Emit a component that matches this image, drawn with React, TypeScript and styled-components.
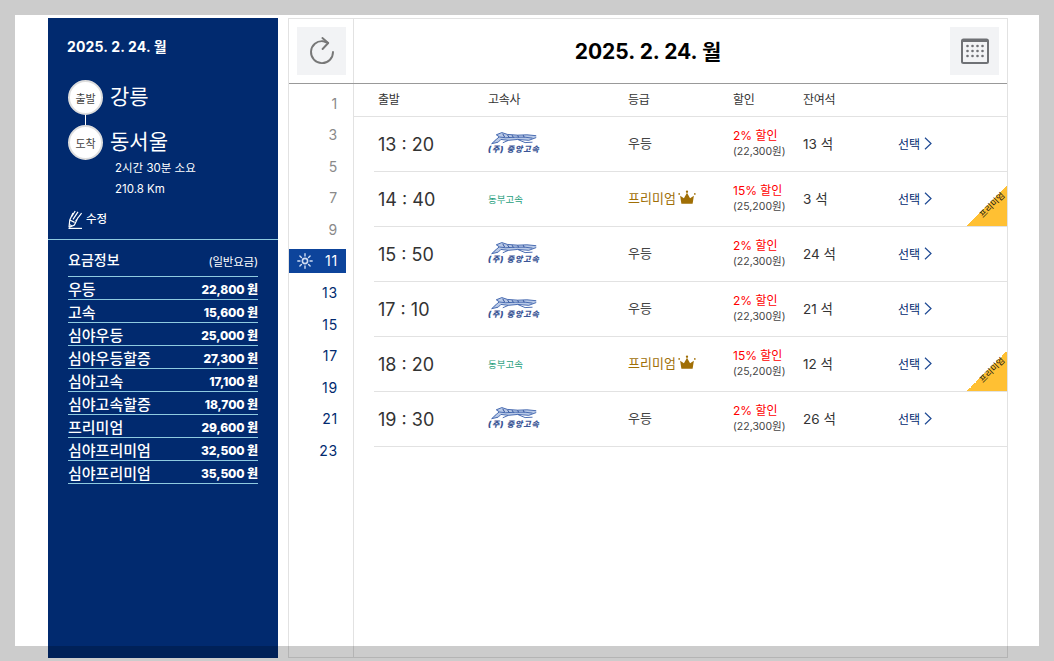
import React from 'react';
import styled, { createGlobalStyle } from 'styled-components';

const FONT = `Inter, "Noto Sans CJK KR", sans-serif`;
const NAVY = '#012a6f';

type Fare = { name: string; price: string };
type Trip = {
  time: string;
  company: 'kobus' | 'dongbu';
  premium?: boolean;
  discount: string;
  price: string;
  seats: string;
};

const FARES: Fare[] = [
  { name: '우등', price: '22,800 원' },
  { name: '고속', price: '15,600 원' },
  { name: '심야우등', price: '25,000 원' },
  { name: '심야우등할증', price: '27,300 원' },
  { name: '심야고속', price: '17,100 원' },
  { name: '심야고속할증', price: '18,700 원' },
  { name: '프리미엄', price: '29,600 원' },
  { name: '심야프리미엄', price: '32,500 원' },
  { name: '심야프리미엄', price: '35,500 원' },
];

const TRIPS: Trip[] = [
  { time: '13 : 20', company: 'kobus', discount: '2% 할인', price: '(22,300원)', seats: '13 석' },
  { time: '14 : 40', company: 'dongbu', premium: true, discount: '15% 할인', price: '(25,200원)', seats: '3 석' },
  { time: '15 : 50', company: 'kobus', discount: '2% 할인', price: '(22,300원)', seats: '24 석' },
  { time: '17 : 10', company: 'kobus', discount: '2% 할인', price: '(22,300원)', seats: '21 석' },
  { time: '18 : 20', company: 'dongbu', premium: true, discount: '15% 할인', price: '(25,200원)', seats: '12 석' },
  { time: '19 : 30', company: 'kobus', discount: '2% 할인', price: '(22,300원)', seats: '26 석' },
];

const HOURS = [1, 3, 5, 7, 9, 11, 13, 15, 17, 19, 21, 23];

const RefreshIcon = () => (
  <svg width="26" height="28" viewBox="0 0 26 28" fill="none" stroke="#777" strokeWidth="1.9">
    <path d="M24 15 A11 11 0 1 1 14 4.2 L19 6" strokeLinecap="round" />
    <path d="M13.4 1 L19.2 6 L13.6 12" strokeLinecap="round" strokeLinejoin="round" />
  </svg>
);

const CalendarIcon = () => (
  <svg width="28" height="26" viewBox="0 0 28 26">
    <rect x="1" y="1.6" width="26" height="23.4" rx="1.5" fill="none" stroke="#6f7175" strokeWidth="2" />
    <rect x="1" y="1" width="26" height="3" fill="#6f7175" />
    {[8, 13, 18].map((y) =>
      [6, 11, 16, 21].map((x) => <circle key={`${x}-${y}`} cx={x + 0.5} cy={y} r="1.3" fill="#6f7175" />),
    )}
  </svg>
);

const PencilIcon = () => (
  <svg width="15" height="19" viewBox="0 0 15 19" fill="none" stroke="#fff" strokeWidth="1.2">
    <path d="M0.5 18.4 H14" />
    <path d="M1 17.4 L1.8 10 L5 3 M1 17.4 L6.4 15 L10 7.6 M1.8 10 L6.6 12.4 M3.6 6.8 L7.2 1 M5 9.4 L10 1.8 M7.6 11 L13.6 3.2 M2 14.6 L3.8 16" />
  </svg>
);

const SunIcon = () => (
  <svg width="16" height="16" viewBox="0 0 16 16" fill="none" stroke="#cfdcf2" strokeLinecap="round">
    <circle cx="8" cy="8" r="2.6" strokeWidth="1.6" />
    <path
      strokeWidth="1.4"
      d="M8 .8V3M8 13V15.2M.8 8H3M13 8H15.2M2.9 2.9L4.4 4.4M11.6 11.6L13.1 13.1M2.9 13.1L4.4 11.6M11.6 4.4L13.1 2.9"
    />
  </svg>
);

const CrownIcon = () => (
  <svg width="18" height="15" viewBox="0 0 17 14">
    <path fill="#a06f06" d="M3.2 12.8 L2 5.4 L5.6 7.8 L8.5 2.6 L11.4 7.8 L15 5.4 L13.8 12.8 Z" />
    <circle cx="8.5" cy="1.6" r="1.1" fill="#a06f06" />
    <circle cx="1.1" cy="3.6" r="0.8" fill="#a06f06" />
    <circle cx="15.9" cy="3.6" r="0.8" fill="#a06f06" />
  </svg>
);

const ChevronIcon = () => (
  <svg width="8" height="13" viewBox="0 0 8 13" fill="none" stroke="#1f4a94" strokeWidth="1.2">
    <path d="M1 .8 L7 6.5 L1 12.2" />
  </svg>
);

const DogIcon = () => (
  <svg width="50" height="13" viewBox="0 0 50 14">
    <path fill="#b9c9e6" d="M7 3 L13 .6 L19 2.6 L30 3.4 L40 3 L50 4 L50 6 L42 9 L30 8 L20 9 L12 8 L9 11 L2 12.6 L6 8 L10 6 Z" />
    <g fill="none" stroke="#3f63ad" strokeWidth="1">
      <path d="M7 3 L13 .6 L19 2.6 L30 3.4 L40 3 L50 4" />
      <path d="M10 5.4 L7 8 L2 12.6 L9 11 L12 8 L20 9 L30 8 L42 9 L50 6" />
      <path d="M7 3 L10.5 5.4 L17 6.2 L28 5.6 L38 5.6 L46 6.6" />
      <path d="M14 2 L16 5.6 M19 3 L21 6 M24 3.4 L25.4 5.8 M30 3.6 L31 5.8 M36 3.4 L37 5.6" stroke="#2b4c96" />
      <path d="M30 8 L38 11.4 L46 11 M20 9 L14 11.6" />
    </g>
  </svg>
);

const App: React.FC = () => {
  return (
    <>
      <GlobalStyle />
      <Page>
        <Sidebar>
          <SideDate>2025. 2. 24. 월</SideDate>
          <Route>
            <Stop>
              <StopBadge>출발</StopBadge>
              <StopName>강릉</StopName>
            </Stop>
            <Stop>
              <StopBadge>도착</StopBadge>
              <StopName>동서울</StopName>
            </Stop>
          </Route>
          <RouteMeta>
            <span>2시간 30분 소요</span>
            <span>210.8 Km</span>
          </RouteMeta>
          <EditLink>
            <PencilIcon />
            <EditLabel>수정</EditLabel>
          </EditLink>
          <FarePanel>
            <FareHeader>
              <FareTitle>요금정보</FareTitle>
              <FareNote>(일반요금)</FareNote>
            </FareHeader>
            {FARES.map((fare, i) => (
              <FareRow key={i}>
                <span>{fare.name}</span>
                <FarePrice>{fare.price}</FarePrice>
              </FareRow>
            ))}
          </FarePanel>
        </Sidebar>
        <Main>
          <TopBar>
            <TopLeft>
              <IconButton>
                <RefreshIcon />
              </IconButton>
            </TopLeft>
            <Title>2025. 2. 24. 월</Title>
            <IconButton>
              <CalendarIcon />
            </IconButton>
          </TopBar>
          <Body>
            <HourColumn>
              {HOURS.map((hour) => (
                <HourItem key={hour} $active={hour === 11} $past={hour < 11}>
                  {hour === 11 && <SunIcon />}
                  {hour}
                </HourItem>
              ))}
            </HourColumn>
            <TripList>
              <HeaderRow>
                <span>출발</span>
                <span>고속사</span>
                <span>등급</span>
                <span>할인</span>
                <span>잔여석</span>
              </HeaderRow>
              {TRIPS.map((trip) => (
                <TripRow key={trip.time}>
                  <TimeCell>{trip.time}</TimeCell>
                  {trip.company === 'kobus' ? (
                    <Kobus>
                      <DogIcon />
                      <KobusName>(주) 중앙고속</KobusName>
                    </Kobus>
                  ) : (
                    <Dongbu>동부고속</Dongbu>
                  )}
                  <GradeCell $premium={trip.premium}>
                    {trip.premium ? '프리미엄' : '우등'}
                    {trip.premium && <CrownIcon />}
                  </GradeCell>
                  <DiscountCell>
                    <DiscountRate>{trip.discount}</DiscountRate>
                    <DiscountPrice>{trip.price}</DiscountPrice>
                  </DiscountCell>
                  <SeatCell>{trip.seats}</SeatCell>
                  <SelectLink>
                    선택
                    <ChevronIcon />
                  </SelectLink>
                  {trip.premium && (
                    <Ribbon>
                      <RibbonText>프리미엄</RibbonText>
                    </Ribbon>
                  )}
                </TripRow>
              ))}
            </TripList>
          </Body>
        </Main>
      </Page>
      <Frame />
    </>
  );
};
export default App;

const GlobalStyle = createGlobalStyle`
  html, body {
    margin: 0;
    height: 100%;
    overflow: hidden;
    background: #fff;
  }
  body {
    font-family: ${FONT};
    color: #222;
  }
  * {
    box-sizing: border-box;
  }
`;

const Frame = styled.div`
  position: fixed;
  inset: 0;
  border: 15px solid rgba(0, 0, 0, 0.2);
  pointer-events: none;
`;

const Page = styled.div`
  display: flex;
  gap: 10px;
  width: 960px;
  height: 640px;
  margin: 18px 0 0 48px;
`;

const Sidebar = styled.aside`
  width: 230px;
  background: ${NAVY};
  color: #fff;
  display: flex;
  flex-direction: column;
`;

const SideDate = styled.div`
  margin: 19px 0 0 19px;
  font-size: 14px;
  line-height: 20px;
  font-weight: 700;
  letter-spacing: 0.15px;
`;

const Route = styled.div`
  display: flex;
  flex-direction: column;
  gap: 10px;
  margin: 23px 0 0 20px;
`;

const Stop = styled.div`
  position: relative;
  display: flex;
  align-items: center;
  gap: 7px;
  height: 35px;
  &:first-child::after {
    content: '';
    position: absolute;
    left: 17px;
    top: 35px;
    width: 1px;
    height: 10px;
    background: #fff;
  }
`;

const StopBadge = styled.div`
  width: 35px;
  height: 35px;
  border-radius: 50%;
  background: #fff;
  border: 2px solid #ddd;
  color: #444;
  font-size: 11px;
  display: flex;
  align-items: center;
  justify-content: center;
`;

const StopName = styled.div`
  font-size: 21px;
  line-height: 30px;
  margin-top: -1px;
`;

const RouteMeta = styled.div`
  display: flex;
  flex-direction: column;
  margin: -2px 0 0 67px;
  font-size: 11.5px;
  line-height: 21px;
`;

const EditLink = styled.div`
  display: flex;
  align-items: center;
  gap: 3px;
  margin: 9px 0 0 20px;
  height: 20px;
`;

const EditLabel = styled.span`
  font-size: 11.5px;
  font-weight: 500;
  margin-top: -3px;
`;

const FarePanel = styled.div`
  margin-top: 10px;
  padding: 8px 20px 0;
  border-top: 1px solid #8fcbe0;
`;

const FareHeader = styled.div`
  display: flex;
  justify-content: space-between;
  align-items: center;
  height: 29px;
  padding-bottom: 6px;
  border-bottom: 1px solid #8fcbe0;
`;

const FareTitle = styled.span`
  font-size: 14px;
  font-weight: 500;
`;

const FareNote = styled.span`
  font-size: 11.5px;
  letter-spacing: -0.2px;
  margin-top: 3px;
`;

const FareRow = styled.div`
  display: flex;
  justify-content: space-between;
  align-items: center;
  height: 23px;
  font-size: 15px;
  font-weight: 500;
  border-bottom: 1px solid #8fcbe0;
`;

const FarePrice = styled.span`
  font-size: 12px;
  font-weight: 800;
  letter-spacing: -0.1px;
`;

const Main = styled.main`
  width: 720px;
  border: 1px solid #e2e2e2;
  display: flex;
  flex-direction: column;
`;

const TopBar = styled.div`
  display: flex;
  align-items: center;
  height: 65px;
  padding-right: 8px;
  border-bottom: 1px solid #999;
`;

const TopLeft = styled.div`
  display: flex;
  align-items: center;
  width: 65px;
  height: 100%;
  padding-left: 8px;
  border-right: 1px solid #e2e2e2;
`;

const IconButton = styled.div`
  width: 49px;
  height: 48px;
  background: #f2f3f5;
  display: flex;
  align-items: center;
  justify-content: center;
`;

const Title = styled.h1`
  flex: 1;
  margin: -2px 8px 0 0;
  text-align: center;
  font-size: 21px;
  font-weight: 700;
  color: #000;
`;

const Body = styled.div`
  flex: 1;
  display: flex;
`;

const HourColumn = styled.div`
  width: 65px;
  border-right: 1px solid #e2e2e2;
  padding-top: 7px;
  display: flex;
  flex-direction: column;
`;

const HourItem = styled.div<{ $active?: boolean; $past?: boolean }>`
  display: flex;
  align-items: center;
  justify-content: ${(props) => (props.$active ? 'space-between' : 'flex-end')};
  width: 57px;
  height: 24px;
  margin-bottom: 7.6px;
  padding: 0 8px;
  font-size: 14px;
  letter-spacing: 0.8px;
  color: ${(props) => (props.$active ? '#fff' : props.$past ? '#8a8a8a' : NAVY)};
  background: ${(props) => (props.$active ? '#0d449b' : 'transparent')};
`;

const TripList = styled.div`
  flex: 1;
`;

const HeaderRow = styled.div`
  display: grid;
  grid-template-columns: 110px 140px 105px 70px 1fr;
  align-items: center;
  height: 33px;
  padding: 0 0 4px 24px;
  border-bottom: 1px solid #e2e2e2;
  font-size: 12px;
  letter-spacing: -0.3px;
  color: #333;
`;

const TripRow = styled.div`
  position: relative;
  display: grid;
  grid-template-columns: 110px 140px 105px 70px 95px 1fr;
  align-items: center;
  height: 55px;
  margin-left: 20px;
  padding-left: 4px;
  border-bottom: 1px solid #e2e2e2;
`;

const TimeCell = styled.div`
  font-size: 18px;
  color: #333;
`;

const Kobus = styled.div`
  display: flex;
  flex-direction: column;
  align-items: flex-start;
  line-height: 0;
  margin-top: -2px;
`;

const KobusName = styled.span`
  font-size: 8px;
  line-height: 9px;
  font-weight: 900;
  font-style: italic;
  letter-spacing: 0.9px;
  white-space: nowrap;
  color: #3a5596;
`;

const Dongbu = styled.div`
  font-size: 9.5px;
  color: #1f9e7c;
`;

const GradeCell = styled.div<{ $premium?: boolean }>`
  display: flex;
  align-items: center;
  gap: 2px;
  margin-top: -3px;
  font-size: 13px;
  color: ${(props) => (props.$premium ? '#a06f06' : '#444')};
`;

const DiscountCell = styled.div`
  display: flex;
  flex-direction: column;
  margin-top: -1px;
`;

const DiscountRate = styled.span`
  font-size: 12px;
  line-height: 17px;
  color: #f00;
`;

const DiscountPrice = styled.span`
  font-size: 10.5px;
  line-height: 16px;
  color: #444;
`;

const SeatCell = styled.div`
  font-size: 13.5px;
  color: #333;
  margin-top: -3px;
`;

const SelectLink = styled.div`
  display: flex;
  align-items: center;
  gap: 4px;
  margin-top: -1px;
  font-size: 12px;
  color: ${NAVY};
`;

const Ribbon = styled.div`
  position: absolute;
  right: 0;
  bottom: 0;
  width: 40px;
  height: 40px;
  background: linear-gradient(135deg, transparent 50%, #ffc033 50%);
`;

const RibbonText = styled.span`
  position: absolute;
  left: 9px;
  top: 13px;
  width: 32px;
  font-size: 8.5px;
  line-height: 12px;
  text-align: center;
  color: #111;
  white-space: nowrap;
  transform: rotate(-45deg);
`;
